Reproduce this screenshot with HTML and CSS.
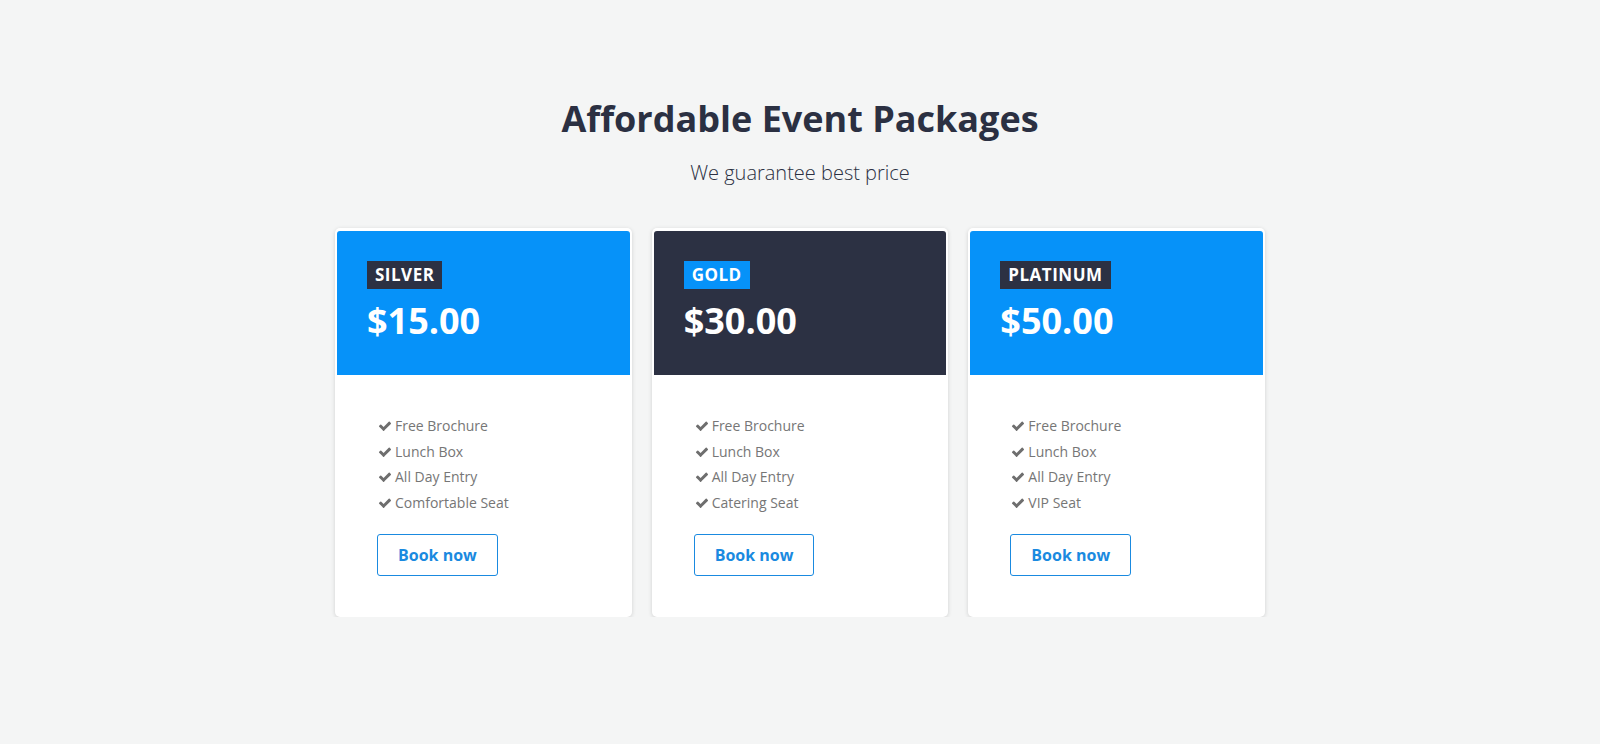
FILE: index.html
```html
<!DOCTYPE html>
<html lang="en">
<head>
<meta charset="utf-8">
<title>Affordable Event Packages</title>
<link rel="stylesheet" href="styles.css">
</head>
<body>
<section class="pricing">
  <h1 class="pricing-title">Affordable Event Packages</h1>
  <p class="pricing-sub">We guarantee best price</p>
  <div class="cards">
    <div class="card">
      <div class="card-head head-blue">
        <span class="badge badge-dark">SILVER</span>
        <div class="price">$15.00</div>
      </div>
      <div class="card-body">
        <ul class="features">
          <li><svg class="check" viewBox="0 0 1792 1792"><path d="M1671 566q0 40-28 68l-724 724-136 136q-28 28-68 28t-68-28l-136-136-362-362q-28-28-28-68t28-68l136-136q28-28 68-28t68 28l294 295 656-657q28-28 68-28t68 28l136 136q28 28 28 68z"/></svg>Free Brochure</li>
          <li><svg class="check" viewBox="0 0 1792 1792"><path d="M1671 566q0 40-28 68l-724 724-136 136q-28 28-68 28t-68-28l-136-136-362-362q-28-28-28-68t28-68l136-136q28-28 68-28t68 28l294 295 656-657q28-28 68-28t68 28l136 136q28 28 28 68z"/></svg>Lunch Box</li>
          <li><svg class="check" viewBox="0 0 1792 1792"><path d="M1671 566q0 40-28 68l-724 724-136 136q-28 28-68 28t-68-28l-136-136-362-362q-28-28-28-68t28-68l136-136q28-28 68-28t68 28l294 295 656-657q28-28 68-28t68 28l136 136q28 28 28 68z"/></svg>All Day Entry</li>
          <li><svg class="check" viewBox="0 0 1792 1792"><path d="M1671 566q0 40-28 68l-724 724-136 136q-28 28-68 28t-68-28l-136-136-362-362q-28-28-28-68t28-68l136-136q28-28 68-28t68 28l294 295 656-657q28-28 68-28t68 28l136 136q28 28 28 68z"/></svg>Comfortable Seat</li>
        </ul>
        <a class="btn" href="#">Book now</a>
      </div>
    </div>
    <div class="card">
      <div class="card-head head-dark">
        <span class="badge badge-blue">GOLD</span>
        <div class="price">$30.00</div>
      </div>
      <div class="card-body">
        <ul class="features">
          <li><svg class="check" viewBox="0 0 1792 1792"><path d="M1671 566q0 40-28 68l-724 724-136 136q-28 28-68 28t-68-28l-136-136-362-362q-28-28-28-68t28-68l136-136q28-28 68-28t68 28l294 295 656-657q28-28 68-28t68 28l136 136q28 28 28 68z"/></svg>Free Brochure</li>
          <li><svg class="check" viewBox="0 0 1792 1792"><path d="M1671 566q0 40-28 68l-724 724-136 136q-28 28-68 28t-68-28l-136-136-362-362q-28-28-28-68t28-68l136-136q28-28 68-28t68 28l294 295 656-657q28-28 68-28t68 28l136 136q28 28 28 68z"/></svg>Lunch Box</li>
          <li><svg class="check" viewBox="0 0 1792 1792"><path d="M1671 566q0 40-28 68l-724 724-136 136q-28 28-68 28t-68-28l-136-136-362-362q-28-28-28-68t28-68l136-136q28-28 68-28t68 28l294 295 656-657q28-28 68-28t68 28l136 136q28 28 28 68z"/></svg>All Day Entry</li>
          <li><svg class="check" viewBox="0 0 1792 1792"><path d="M1671 566q0 40-28 68l-724 724-136 136q-28 28-68 28t-68-28l-136-136-362-362q-28-28-28-68t28-68l136-136q28-28 68-28t68 28l294 295 656-657q28-28 68-28t68 28l136 136q28 28 28 68z"/></svg>Catering Seat</li>
        </ul>
        <a class="btn" href="#">Book now</a>
      </div>
    </div>
    <div class="card">
      <div class="card-head head-blue">
        <span class="badge badge-dark">PLATINUM</span>
        <div class="price">$50.00</div>
      </div>
      <div class="card-body">
        <ul class="features">
          <li><svg class="check" viewBox="0 0 1792 1792"><path d="M1671 566q0 40-28 68l-724 724-136 136q-28 28-68 28t-68-28l-136-136-362-362q-28-28-28-68t28-68l136-136q28-28 68-28t68 28l294 295 656-657q28-28 68-28t68 28l136 136q28 28 28 68z"/></svg>Free Brochure</li>
          <li><svg class="check" viewBox="0 0 1792 1792"><path d="M1671 566q0 40-28 68l-724 724-136 136q-28 28-68 28t-68-28l-136-136-362-362q-28-28-28-68t28-68l136-136q28-28 68-28t68 28l294 295 656-657q28-28 68-28t68 28l136 136q28 28 28 68z"/></svg>Lunch Box</li>
          <li><svg class="check" viewBox="0 0 1792 1792"><path d="M1671 566q0 40-28 68l-724 724-136 136q-28 28-68 28t-68-28l-136-136-362-362q-28-28-28-68t28-68l136-136q28-28 68-28t68 28l294 295 656-657q28-28 68-28t68 28l136 136q28 28 28 68z"/></svg>All Day Entry</li>
          <li><svg class="check" viewBox="0 0 1792 1792"><path d="M1671 566q0 40-28 68l-724 724-136 136q-28 28-68 28t-68-28l-136-136-362-362q-28-28-28-68t28-68l136-136q28-28 68-28t68 28l294 295 656-657q28-28 68-28t68 28l136 136q28 28 28 68z"/></svg>VIP Seat</li>
        </ul>
        <a class="btn" href="#">Book now</a>
      </div>
    </div>
  </div>
</section>
</body>
</html>
```
FILE: styles.css
```css
html, body {
  margin: 0;
  padding: 0;
}
body {
  background: #f4f5f5;
  font-family: "Open Sans", "Noto Sans", sans-serif;
  color: #2b3042;
}
.pricing {
  padding-top: 97px;
  display: flex;
  flex-direction: column;
  align-items: center;
}
.pricing-title {
  margin: 0;
  font-size: 36px;
  line-height: 44px;
  font-weight: 700;
  color: #2b3042;
}
.pricing-sub {
  margin: 18px 0 0;
  font-size: 20px;
  line-height: 28px;
  font-weight: 300;
  color: #2b3042;
}
.cards {
  margin-top: 41px;
  width: 930px;
  display: grid;
  grid-template-columns: repeat(3, 1fr);
  gap: 20px;
}
.card {
  background: #fff;
  padding: 3px 2px 0;
  border-radius: 5px;
  box-shadow: 0 1px 4px rgba(0, 0, 0, 0.15);
}
.card-head {
  height: 144px;
  box-sizing: border-box;
  padding: 30px 30px 0;
  border-radius: 3px 3px 0 0;
  color: #fff;
}
.head-blue { background: #0692f9; }
.head-dark { background: #2c3143; }
.badge {
  display: inline-block;
  height: 28px;
  line-height: 28px;
  padding: 0 8px;
  font-size: 17px;
  letter-spacing: 0.5px;
  font-weight: 700;
  color: #fff;
}
.badge-dark { background: #2c3143; }
.badge-blue { background: #0692f9; }
.price {
  margin-top: 10px;
  font-size: 36px;
  line-height: 44px;
  font-weight: 700;
}
.card-body {
  padding: 38px 40px 41px;
}
.features {
  list-style: none;
  margin: 0;
  padding: 0;
}
.features li {
  font-size: 14px;
  line-height: 25.7px;
  color: #767676;
  display: flex;
  align-items: center;
}
.check {
  width: 14px;
  height: 14px;
  fill: #6e6e6e;
  margin-right: 3px;
  margin-left: 1px;
}
.btn {
  display: inline-block;
  margin-top: 18px;
  height: 42px;
  line-height: 40px;
  box-sizing: border-box;
  padding: 0 20px;
  border: 1px solid #1a8ae0;
  border-radius: 3px;
  font-size: 16px;
  font-weight: 700;
  color: #1a8ae0;
  text-decoration: none;
}
```
